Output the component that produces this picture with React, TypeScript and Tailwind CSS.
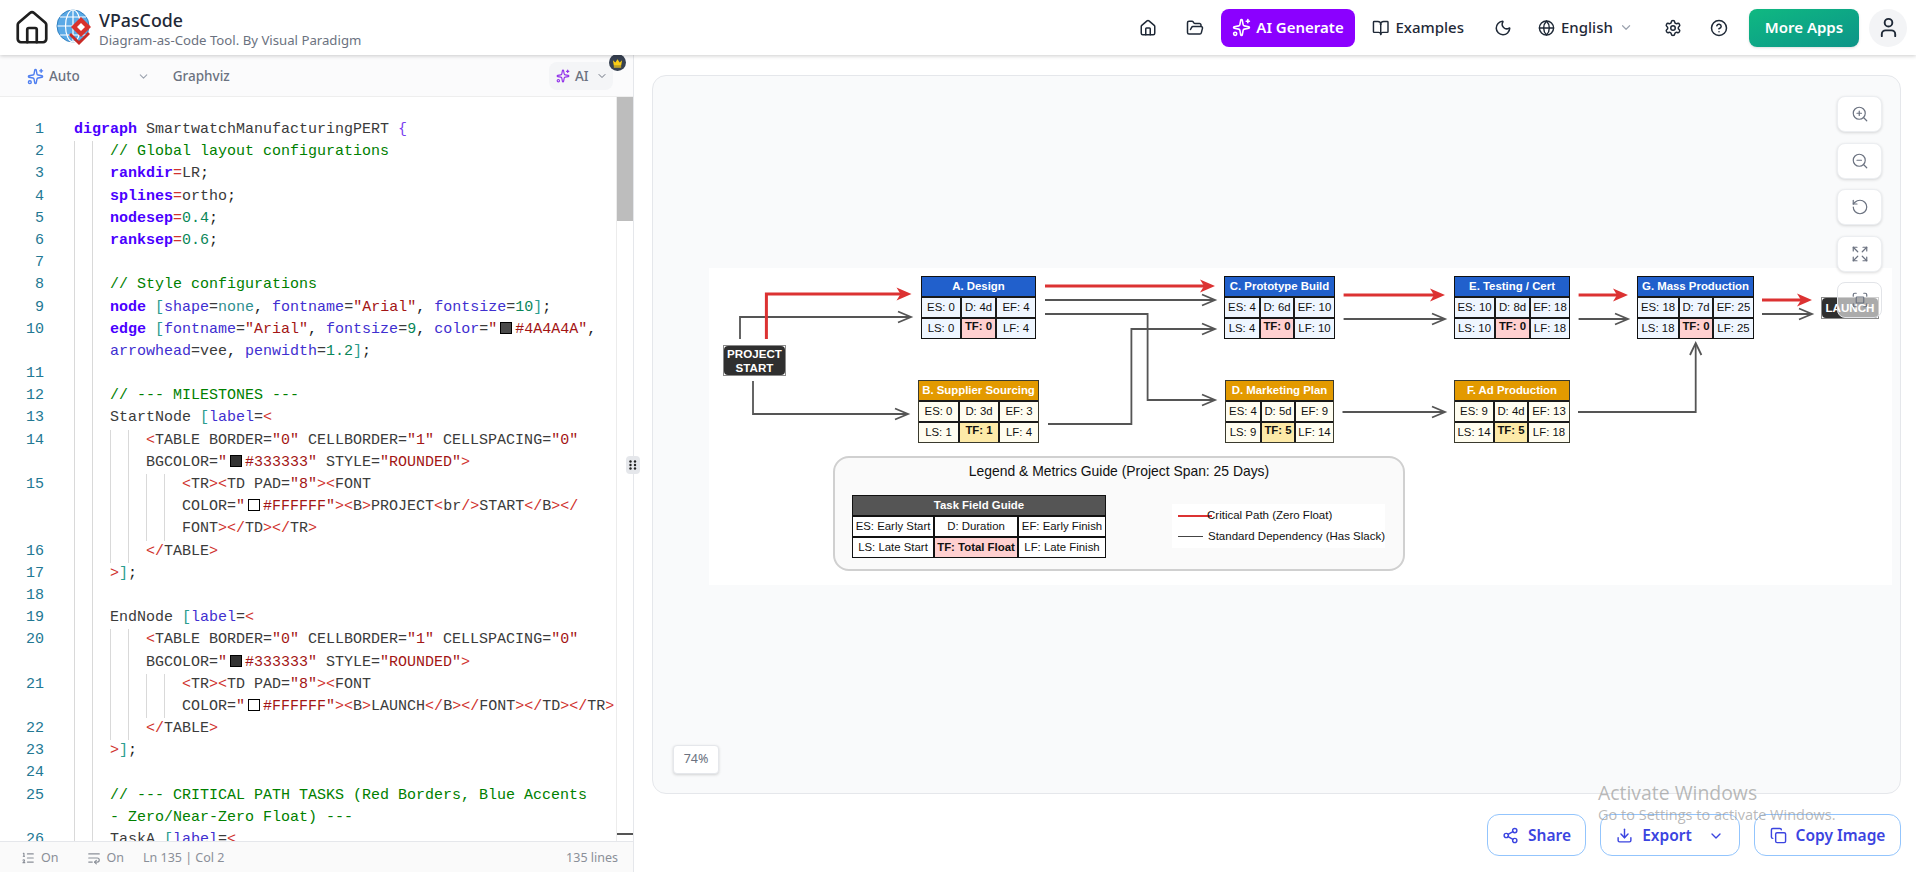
import React from 'react';
import {
  BookOpen, ChevronDown, CircleHelp, Copy, Download, Expand, FolderOpen, Fullscreen, Globe, House,
  ListOrdered, Moon, RotateCcw, Settings, Share2, Sparkles, User, WrapText, ZoomIn, ZoomOut,
} from 'lucide-react';

const tokenClass: Record<string, string> = {
  k: 'text-[#4a00ff] font-bold',
  a: 'text-[#3f2fd0]',
  c: 'text-[#008000]',
  s: 'text-[#a31515]',
  n: 'text-[#098658]',
  t: 'text-[#3b3b3b]',
  o: 'text-[#d0312d]',
  v: 'text-[#2f8f8f]',
  b: 'text-[#7a3df0]',
  g: 'text-[#2a9d8f]',
  x: 'text-[#1f1f1f]',
};

type Part = [string, string];
type Row = { n?: number; g: number; parts: Part[] };

const swatchDark: Part = ['#', '#4a4a4a'];
const swatchCoal: Part = ['#', '#333333'];
const swatchWhite: Part = ['#', '#ffffff'];

const tableOpen: Part[] = [['o', '<'], ['t', 'TABLE BORDER='], ['s', '"0"'], ['t', ' CELLBORDER='], ['s', '"1"'], ['t', ' CELLSPACING='], ['s', '"0"']];
const tableOpen2: Part[] = [['t', 'BGCOLOR='], ['s', '"'], swatchCoal, ['s', '#333333"'], ['t', ' STYLE='], ['s', '"ROUNDED"'], ['o', '>']];
const tdOpen: Part[] = [['o', '<'], ['t', 'TR'], ['o', '><'], ['t', 'TD PAD='], ['s', '"8"'], ['o', '><'], ['t', 'FONT']];
const tableClose: Part[] = [['o', '</'], ['t', 'TABLE'], ['o', '>']];
const labelClose: Part[] = [['o', '>'], ['g', ']'], ['x', ';']];

const rows: Row[] = [
  { n: 1, g: 0, parts: [['k', 'digraph'], ['t', ' SmartwatchManufacturingPERT '], ['b', '{']] },
  { n: 2, g: 2, parts: [['c', '// Global layout configurations']] },
  { n: 3, g: 2, parts: [['k', 'rankdir'], ['o', '='], ['t', 'LR'], ['x', ';']] },
  { n: 4, g: 2, parts: [['k', 'splines'], ['o', '='], ['t', 'ortho'], ['x', ';']] },
  { n: 5, g: 2, parts: [['k', 'nodesep'], ['o', '='], ['n', '0.4'], ['x', ';']] },
  { n: 6, g: 2, parts: [['k', 'ranksep'], ['o', '='], ['n', '0.6'], ['x', ';']] },
  { n: 7, g: 2, parts: [] },
  { n: 8, g: 2, parts: [['c', '// Style configurations']] },
  { n: 9, g: 2, parts: [['k', 'node'], ['t', ' '], ['g', '['], ['a', 'shape'], ['t', '='], ['v', 'none'], ['x', ', '], ['a', 'fontname'], ['t', '='], ['s', '"Arial"'], ['x', ', '], ['a', 'fontsize'], ['t', '='], ['n', '10'], ['g', ']'], ['x', ';']] },
  { n: 10, g: 2, parts: [['k', 'edge'], ['t', ' '], ['g', '['], ['a', 'fontname'], ['t', '='], ['s', '"Arial"'], ['x', ', '], ['a', 'fontsize'], ['t', '='], ['n', '9'], ['x', ', '], ['a', 'color'], ['t', '='], ['s', '"'], swatchDark, ['s', '#4A4A4A"'], ['x', ',']] },
  { g: 2, parts: [['a', 'arrowhead'], ['t', '=vee'], ['x', ', '], ['a', 'penwidth'], ['t', '='], ['n', '1.2'], ['g', ']'], ['x', ';']] },
  { n: 11, g: 2, parts: [] },
  { n: 12, g: 2, parts: [['c', '// --- MILESTONES ---']] },
  { n: 13, g: 2, parts: [['t', 'StartNode '], ['g', '['], ['a', 'label'], ['t', '='], ['o', '<']] },
  { n: 14, g: 4, parts: tableOpen },
  { g: 4, parts: tableOpen2 },
  { n: 15, g: 6, parts: tdOpen },
  { g: 6, parts: [['t', 'COLOR='], ['s', '"'], swatchWhite, ['s', '#FFFFFF"'], ['o', '><'], ['t', 'B'], ['o', '>'], ['t', 'PROJECT'], ['o', '<'], ['t', 'br'], ['o', '/>'], ['t', 'START'], ['o', '</'], ['t', 'B'], ['o', '></']] },
  { g: 6, parts: [['t', 'FONT'], ['o', '></'], ['t', 'TD'], ['o', '></'], ['t', 'TR'], ['o', '>']] },
  { n: 16, g: 4, parts: tableClose },
  { n: 17, g: 2, parts: labelClose },
  { n: 18, g: 2, parts: [] },
  { n: 19, g: 2, parts: [['t', 'EndNode '], ['g', '['], ['a', 'label'], ['t', '='], ['o', '<']] },
  { n: 20, g: 4, parts: tableOpen },
  { g: 4, parts: tableOpen2 },
  { n: 21, g: 6, parts: tdOpen },
  { g: 6, parts: [['t', 'COLOR='], ['s', '"'], swatchWhite, ['s', '#FFFFFF"'], ['o', '><'], ['t', 'B'], ['o', '>'], ['t', 'LAUNCH'], ['o', '</'], ['t', 'B'], ['o', '></'], ['t', 'FONT'], ['o', '></'], ['t', 'TD'], ['o', '></'], ['t', 'TR'], ['o', '>']] },
  { n: 22, g: 4, parts: tableClose },
  { n: 23, g: 2, parts: labelClose },
  { n: 24, g: 2, parts: [] },
  { n: 25, g: 2, parts: [['c', '// --- CRITICAL PATH TASKS (Red Borders, Blue Accents']] },
  { g: 2, parts: [['c', '- Zero/Near-Zero Float) ---']] },
  { n: 26, g: 2, parts: [['t', 'TaskA '], ['g', '['], ['a', 'label'], ['t', '='], ['o', '<']] },
];

const CodeRow = ({ row }: { row: Row }) => (
  <div className="flex h-[22.2px] leading-[22.2px]">
    <div className="w-[44px] shrink-0 text-right text-[#237893]">{row.n}</div>
    <div className="w-[30px] shrink-0" />
    {Array.from({ length: row.g }).map((_, i) => (
      <span key={i} className="w-[18px] shrink-0 border-l border-[#d9d9d9]" />
    ))}
    <div className="whitespace-pre">
      {row.parts.map(([kind, text], i) =>
        kind === '#' ? (
          <span
            key={i}
            className="mx-[3px] inline-block h-[12px] w-[12px] border border-black align-[-1px]"
            style={{ backgroundColor: text }}
          />
        ) : (
          <span key={i} className={tokenClass[kind]}>{text}</span>
        ),
      )}
    </div>
  </div>
);

const Logo = () => (
  <svg width="38" height="38" viewBox="0 0 38 38" className="shrink-0">
    <circle cx="17" cy="17" r="16" fill="#5aa9e6" stroke="#2f7fc0" strokeWidth="1" />
    <g fill="none" stroke="#ffffff" strokeWidth="1.2">
      <ellipse cx="17" cy="17" rx="7.5" ry="16" />
      <path d="M17 1v32M1.5 17h31M4 8h26M4 26h26" />
    </g>
    <path d="M25 8l10 10-10 10-10-10z" fill="#d8312c" />
    <path d="M25 14l4 4-4 4-4-4z" fill="#ffffff" />
    <path d="M15 24l8 8 9-9 2 2-11 11-10-10z" fill="#c92a26" />
  </svg>
);

const NavIcon = ({ children }: { children: React.ReactNode }) => (
  <button className="flex h-[38px] w-[38px] items-center justify-center text-[#1f2937]">{children}</button>
);

const ZoomBtn = ({ children }: { children: React.ReactNode }) => (
  <button className="flex h-[36px] w-[45px] items-center justify-center rounded-lg border border-[#eceef1] bg-white text-[#6b7280] shadow-[0_1px_3px_rgba(0,0,0,0.14)]">
    {children}
  </button>
);

type TaskNode = {
  title: string;
  place: string;
  cols: string;
  warm?: boolean;
  cells: string[];
  tf: string;
};

const tasks: TaskNode[] = [
  { title: 'A. Design', place: 'left-[212px] top-[8px]', cols: 'grid-cols-[40px_35px_40px]', cells: ['ES: 0', 'D: 4d', 'EF: 4', 'LS: 0', 'LF: 4'], tf: 'TF: 0' },
  { title: 'C. Prototype Build', place: 'left-[515px] top-[8px]', cols: 'grid-cols-[36px_34px_41px]', cells: ['ES: 4', 'D: 6d', 'EF: 10', 'LS: 4', 'LF: 10'], tf: 'TF: 0' },
  { title: 'E. Testing / Cert', place: 'left-[745px] top-[8px]', cols: 'grid-cols-[41px_35px_40px]', cells: ['ES: 10', 'D: 8d', 'EF: 18', 'LS: 10', 'LF: 18'], tf: 'TF: 0' },
  { title: 'G. Mass Production', place: 'left-[928px] top-[8px]', cols: 'grid-cols-[42px_34px_41px]', cells: ['ES: 18', 'D: 7d', 'EF: 25', 'LS: 18', 'LF: 25'], tf: 'TF: 0' },
  { title: 'B. Supplier Sourcing', place: 'left-[209px] top-[112px]', cols: 'grid-cols-[41px_40px_40px]', warm: true, cells: ['ES: 0', 'D: 3d', 'EF: 3', 'LS: 1', 'LF: 4'], tf: 'TF: 1' },
  { title: 'D. Marketing Plan', place: 'left-[516px] top-[112px]', cols: 'grid-cols-[36px_34px_39px]', warm: true, cells: ['ES: 4', 'D: 5d', 'EF: 9', 'LS: 9', 'LF: 14'], tf: 'TF: 5' },
  { title: 'F. Ad Production', place: 'left-[745px] top-[112px]', cols: 'grid-cols-[40px_34px_42px]', warm: true, cells: ['ES: 9', 'D: 4d', 'EF: 13', 'LS: 14', 'LF: 18'], tf: 'TF: 5' },
];

const Task = ({ task }: { task: TaskNode }) => {
  const cellTone = task.warm ? 'bg-[#fffdf0]' : 'bg-[#eff6ff]';
  const cell = (text: string) => (
    <div key={text} className={`flex items-center justify-center ${cellTone}`}>{text}</div>
  );
  return (
    <div className={`absolute grid ${task.place} ${task.cols} grid-rows-[21px_21px_21px] outline-[1px] ${task.warm ? 'outline-[#3a3a2e]' : 'outline-[#111111]'} -outline-offset-[1px] text-[11.4px] text-[#111] [&>div]:border [&>div]:border-[#1a1a1a]`}>
      <div className={`col-span-3 flex items-center justify-center whitespace-nowrap font-bold text-white ${task.warm ? 'bg-[#e39a00]' : 'bg-[#2160cc]'}`}>
        {task.title}
      </div>
      {task.cells.slice(0, 3).map(cell)}
      {cell(task.cells[3])}
      <div className={`flex items-center justify-center pb-[3px] font-bold ${task.warm ? 'bg-[#fdeaa8]' : 'bg-[#ffd0d0]'}`}>{task.tf}</div>
      {cell(task.cells[4])}
    </div>
  );
};

const Milestone = ({ place, children }: { place: string; children: React.ReactNode }) => (
  <div className={`absolute border border-[#8a8a8a] bg-white ${place}`}>
    <div className="flex h-full w-full items-center justify-center rounded-[4px] bg-[#2f2f2f] text-center text-[11.6px] font-bold leading-[13.5px] text-white">
      {children}
    </div>
  </div>
);

const RED = '#dc3232';
const GREY = '#555555';

const redLines = ['M57.4 71V26H195', 'M336 18H498', 'M634.6 27H728', 'M869.6 27H912', 'M1053 32H1096'];
const redTips: [number, number][] = [[202.5, 26], [506, 18], [736, 27], [919, 27], [1103, 32]];
const greyLines = [
  'M31 71V49H202',
  'M44 113V146H199',
  'M336 32H506',
  'M336 46H438.6V132H506',
  'M339 156H422.4V61H506',
  'M634.6 51H736',
  'M869.6 51H919',
  'M1053 46H1103',
  'M633.5 144H736',
  'M869 144H986.7V76',
];
const greyTips: [number, number][] = [[202, 49], [199, 146], [506, 32], [506, 132], [506, 61], [736, 51], [919, 51], [1103, 46], [736, 144]];

const Edges = () => (
  <svg width="1183" height="317" viewBox="0 0 1183 317" className="absolute left-0 top-0" fill="none">
    {greyLines.map((d) => (
      <path key={d} d={d} stroke={GREY} strokeWidth="1.8" />
    ))}
    {greyTips.map(([x, y]) => (
      <path key={`${x}-${y}`} d={`M${x - 13} ${y - 5.5}L${x} ${y}L${x - 13} ${y + 5.5}`} stroke={GREY} strokeWidth="1.8" />
    ))}
    <path d="M981 87L986.7 75L992.4 87" stroke={GREY} strokeWidth="1.8" />
    {redLines.map((d) => (
      <path key={d} d={d} stroke={RED} strokeWidth="3" />
    ))}
    {redTips.map(([x, y]) => (
      <path key={`${x}-${y}`} d={`M${x} ${y}L${x - 15} ${y - 6.5}L${x - 11} ${y}L${x - 15} ${y + 6.5}Z`} fill={RED} />
    ))}
  </svg>
);

const guideCells = ['ES: Early Start', 'D: Duration', 'EF: Early Finish', 'LS: Late Start', 'TF: Total Float', 'LF: Late Finish'];

const Legend = () => (
  <div className="absolute left-[124px] top-[188px] h-[115px] w-[572px] rounded-[16px] border-2 border-[#d0d0d0] bg-[#fafafa] text-[#111]">
    <div className="h-[37px] pt-[4px] text-center text-[13.9px] leading-[18px]">Legend &amp; Metrics Guide (Project Span: 25 Days)</div>
    <div className="flex items-start pl-[17px]">
      <div className="grid grid-cols-[82px_84px_88px] grid-rows-[21px_21px_21px] text-[11.4px] outline-[1px] -outline-offset-[1px] outline-[#111] [&>div]:border [&>div]:border-[#111]">
        <div className="col-span-3 flex items-center justify-center bg-[#555555] font-bold text-white">Task Field Guide</div>
        {guideCells.map((text) => (
          <div
            key={text}
            className={`flex items-center justify-center whitespace-nowrap ${text.startsWith('TF') ? 'bg-[#ffd0d0] font-bold' : 'bg-white'}`}
          >
            {text}
          </div>
        ))}
      </div>
      <div className="ml-[66px] mt-[9px] flex h-[44px] w-[213px] flex-col justify-center gap-[6px] bg-white text-[11.5px] leading-[15px]">
        <div className="flex items-center pl-[6px]">
          <span className="h-[2px] w-[34px] shrink-0 bg-[#dc3232]" />
          <span className="-ml-[5px] whitespace-nowrap">Critical Path (Zero Float)</span>
        </div>
        <div className="flex items-center pl-[6px]">
          <span className="h-px w-[25px] shrink-0 bg-[#444]" />
          <span className="ml-[5px] whitespace-nowrap">Standard Dependency (Has Slack)</span>
        </div>
      </div>
    </div>
  </div>
);

const OutlineBtn = ({ width, children }: { width: string; children: React.ReactNode }) => (
  <button className={`flex h-[42px] items-center justify-center rounded-xl border border-[#93c5fd] bg-white pt-px text-[15.5px] font-semibold text-[#3b44e0] ${width}`}>
    {children}
  </button>
);

export default function App() {
  return (
    <div className="flex h-[872px] w-full flex-col overflow-hidden bg-white font-['Noto_Sans',sans-serif]">
      <header className="relative z-10 flex h-[55px] shrink-0 items-center bg-white pl-[13px] pr-[9px] shadow-[0_1px_4px_rgba(0,0,0,0.2)]">
        <House size={38} strokeWidth={1.7} className="text-[#1f1f1f]" />
        <div className="ml-[5px]"><Logo /></div>
        <div className="ml-[5px] flex flex-col">
          <span className="text-[17.8px] font-medium leading-[24px] text-[#1f2937]">VPasCode</span>
          <span className="text-[13.2px] leading-[16px] text-[#6b7280]">Diagram-as-Code Tool. By Visual Paradigm</span>
        </div>
        <div className="ml-auto flex items-center text-[15px] font-medium text-[#1f2937]">
          <NavIcon><House size={18} /></NavIcon>
          <div className="ml-[9px]"><NavIcon><FolderOpen size={18} /></NavIcon></div>
          <button className="ml-[7px] flex h-[38px] w-[134px] items-center justify-center gap-[5px] rounded-lg bg-[#8b00ff] font-semibold text-white">
            <Sparkles size={19} />
            AI Generate
          </button>
          <div className="ml-[17px] flex w-[92px] items-center gap-[6px]">
            <BookOpen size={18} />
            Examples
          </div>
          <div className="ml-[19.5px]"><NavIcon><Moon size={18} /></NavIcon></div>
          <div className="ml-[16.5px] flex w-[95px] items-center gap-[6px]">
            <Globe size={18} />
            English
            <ChevronDown size={15} className="ml-auto text-[#9ca3af]" />
          </div>
          <div className="ml-[20.5px]"><NavIcon><Settings size={18} /></NavIcon></div>
          <div className="ml-[8.5px]"><NavIcon><CircleHelp size={18} /></NavIcon></div>
          <button className="ml-[11px] h-[38px] w-[110px] rounded-lg bg-gradient-to-br from-[#10b981] to-[#0d9488] font-semibold text-white shadow-sm">
            More Apps
          </button>
          <div className="ml-[10px] flex h-[38px] w-[38px] items-center justify-center rounded-full bg-[#f3f4f6]">
            <User size={23} />
          </div>
        </div>
      </header>

      <div className="flex min-h-0 flex-1">
        <section className="relative flex w-[634px] shrink-0 flex-col border-r border-[#e5e7eb]">
          <div className="flex h-[42px] shrink-0 items-center border-b border-[#eeeeee] bg-[#fbfbfc] pt-px text-[13.5px] text-[#6b7280]">
            <Sparkles size={17} className="ml-[27px] text-[#4f7ff0]" />
            <span className="ml-[5px] font-medium">Auto</span>
            <ChevronDown size={13} className="ml-[57px] text-[#9ca3af]" />
            <span className="ml-[23px] font-medium">Graphviz</span>
            <div className="relative ml-auto mr-[20px] flex h-[28px] w-[64px] items-center rounded-lg bg-[#f4f5f7] pl-[7px]">
              <Sparkles size={14} className="text-[#9333ea]" />
              <span className="ml-[5px] font-medium">AI</span>
              <ChevronDown size={12} className="ml-[7px]" />
              <span className="absolute -right-[13px] -top-[8px] flex h-[17px] w-[17px] items-center justify-center rounded-full bg-[#374151]">
                <svg width="11" height="10" viewBox="0 0 12 10" fill="#facc15">
                  <path d="M1 2l2.6 2.4L6 1l2.4 3.4L11 2l-1 6H2z" />
                  <path d="M2 8.6h8V10H2z" />
                </svg>
              </span>
            </div>
          </div>

          <div className="relative min-h-0 flex-1 overflow-hidden pt-[22px] font-['Liberation_Mono',monospace] text-[15px]">
            {rows.map((row, i) => (
              <CodeRow key={i} row={row} />
            ))}
            <div className="absolute bottom-0 right-0 top-0 w-[17px] border-l border-[#ececec] bg-white">
              <div className="h-[124px] bg-[#bdbdbd]" />
              <div className="absolute bottom-[6px] left-0 h-[2px] w-full bg-[#555]" />
            </div>
          </div>

          <div className="flex h-[31px] shrink-0 items-center border-t border-[#e5e7eb] bg-[#fafafa] pt-[2px] text-[12.5px] text-[#8a8f98]">
            <ListOrdered size={14} className="ml-[21px]" />
            <span className="ml-[6px]">On</span>
            <WrapText size={14} className="ml-[28px]" />
            <span className="ml-[6px]">On</span>
            <span className="ml-[19px]">Ln 135 | Col 2</span>
            <span className="ml-auto mr-[15px]">135 lines</span>
          </div>

          <div className="absolute -right-[7px] top-[401px] flex h-[18px] w-[14px] items-center justify-center rounded-sm bg-[#e5e7eb]">
            <svg width="8" height="10" viewBox="0 0 8 10" fill="#222">
              <circle cx="1.5" cy="1.5" r="1.2" /><circle cx="6" cy="1.5" r="1.2" />
              <circle cx="1.5" cy="5" r="1.2" /><circle cx="6" cy="5" r="1.2" />
              <circle cx="1.5" cy="8.5" r="1.2" /><circle cx="6" cy="8.5" r="1.2" />
            </svg>
          </div>
        </section>

        <section className="flex min-w-0 flex-1 flex-col pl-[18px] pr-[15px] pt-[20px]">
          <div className="relative h-[719px] overflow-hidden rounded-[14px] border border-[#e5e7eb] bg-[#f9fafb]">
            <div className="absolute left-[56px] top-[192px] h-[317px] w-[1183px] bg-white font-['Liberation_Sans',Arial,sans-serif]">
              <Edges />
              {tasks.map((task) => (
                <Task key={task.title} task={task} />
              ))}
              <Milestone place="left-[14px] top-[77px] h-[31px] w-[63px]">PROJECT<br />START</Milestone>
              <Milestone place="left-[1112px] top-[29px] h-[22px] w-[58px]">LAUNCH</Milestone>
              <Legend />
            </div>

            <div className="absolute right-[18px] top-[20px] flex flex-col gap-[10.5px]">
              <ZoomBtn><ZoomIn size={18} strokeWidth={1.6} /></ZoomBtn>
              <ZoomBtn><ZoomOut size={18} strokeWidth={1.6} /></ZoomBtn>
              <ZoomBtn><RotateCcw size={18} strokeWidth={1.6} /></ZoomBtn>
              <ZoomBtn><Expand size={18} strokeWidth={1.6} /></ZoomBtn>
              <button className="flex h-[36px] w-[45px] items-center justify-center rounded-lg border border-[#e2e4e8] bg-white/60 text-[#6b7280]">
                <Fullscreen size={18} strokeWidth={1.6} />
              </button>
            </div>

            <div className="absolute bottom-[19px] left-[20px] flex h-[29px] w-[46px] items-center justify-center rounded border border-[#e5e7eb] bg-white text-[12.5px] text-[#6b7280] shadow-[0_1px_3px_rgba(0,0,0,0.16)]">
              74%
            </div>
          </div>

          <div className="mt-[20px] flex justify-end gap-[14px]">
            <OutlineBtn width="w-[99px] gap-[9px]"><Share2 size={17} />Share</OutlineBtn>
            <OutlineBtn width="w-[140px] gap-[9px]"><Download size={17} />Export<ChevronDown size={16} className="ml-[7px]" /></OutlineBtn>
            <OutlineBtn width="w-[147px] gap-[9px]"><Copy size={17} />Copy Image</OutlineBtn>
          </div>
        </section>
      </div>

      <div className="pointer-events-none absolute left-[1598px] top-[779px] z-20 font-['Open_Sans',sans-serif] text-[#9a9a9a]/70">
        <div className="text-[19.4px] leading-[28px]">Activate Windows</div>
        <div className="-mt-px text-[14.5px] leading-[18px]">Go to Settings to activate Windows.</div>
      </div>
    </div>
  );
}
